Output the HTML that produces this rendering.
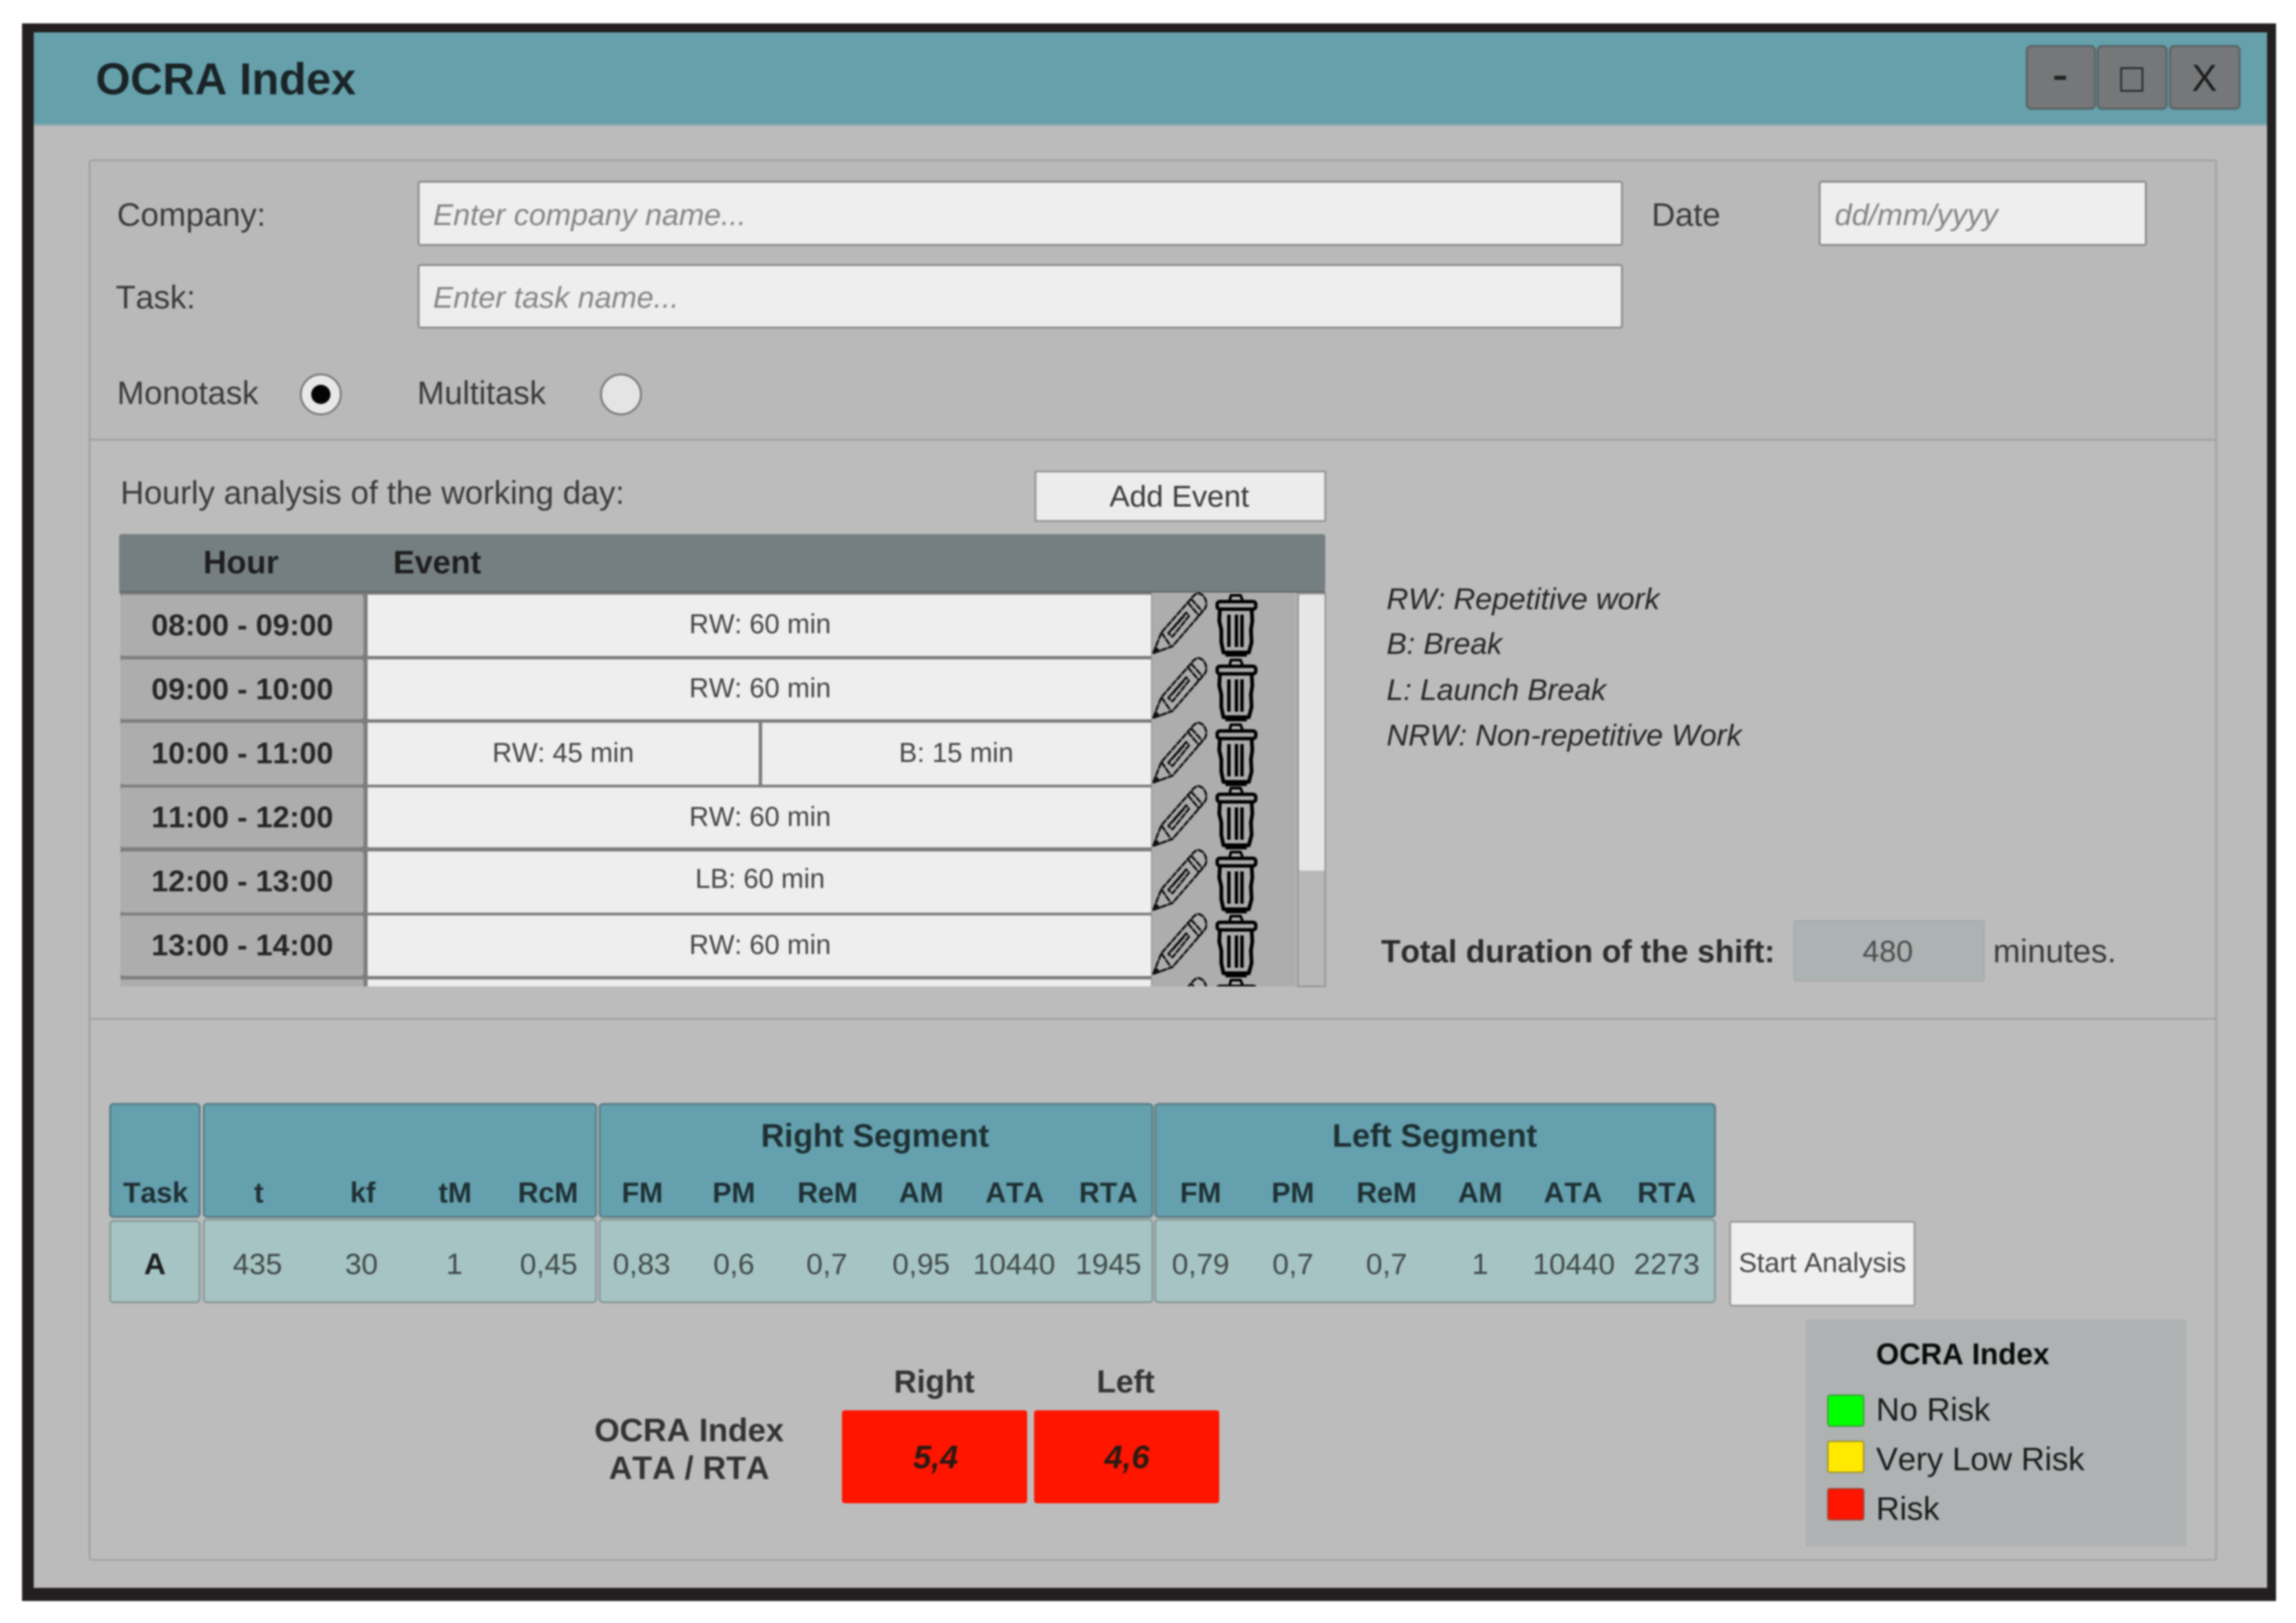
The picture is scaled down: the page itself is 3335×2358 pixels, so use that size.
<!DOCTYPE html>
<html><head><meta charset="utf-8"><title>OCRA Index</title>
<style>
html,body{margin:0;padding:0;background:#fff;width:3335px;height:2358px;overflow:hidden}
svg{display:block;filter:blur(1.3px)}
text{font-family:"Liberation Sans",sans-serif;fill:#3a3a3a;font-kerning:none}
.b{font-weight:700;fill:#2a2a2a}
.m{text-anchor:middle}
.ph{font-style:italic;fill:#858585;font-size:44px}
.l{font-size:47.4px}
.it{font-style:italic;font-size:43.8px;fill:#262626}
.ev{font-size:39.4px;fill:#444;text-anchor:middle}
.hr{font-size:44px;font-weight:700;fill:#262626;text-anchor:middle}
.th{font-size:41.5px;font-weight:700;fill:#1f3034;text-anchor:middle}
.td{font-size:43px;fill:#414949;text-anchor:middle}
</style></head><body>
<svg xmlns="http://www.w3.org/2000/svg" width="3335" height="2358" viewBox="0 0 3335 2358">
<defs>
<clipPath id="rows"><rect x="173" y="860" width="1752" height="573"/></clipPath>
<g id="ico">
<g fill="none" stroke="#0a0a0a" stroke-width="3" stroke-linejoin="round" stroke-dasharray="10 1">
<path d="M5 94 L17 64 L60 15 Q66 7 71 7 Q80 9 82 20 Q83 27 78 32 L33 84 Z"/>
<path d="M55 20 L72 40 M60 15 L77 34 M17 64 L30 83"/>
<path d="M27 65 L53 35 L57 40 L33 70 Z M32 60 L50 40"/>
</g>
<path d="M5 94 L9 85 L15 91 Z" fill="#111" stroke="#111" stroke-width="1.5"/>
<g fill="none" stroke="#000" stroke-linejoin="round">
<path d="M116 18 L118 10 L132 10 L135 18" stroke-width="4" fill="#b5b5b5"/>
<rect x="98" y="19" width="56" height="11" rx="4" stroke-width="5" fill="#a9a9a9"/>
<path d="M102 30 L101 47 L104 60 L104 78 L107 93 L144 93 L148 78 L147 60 L149 47 L148 30" stroke-width="5.5"/>
<path d="M110 96 H141" stroke-width="6"/>
<path d="M115 38 V85 M126 38 V85 M134 38 V85" stroke-width="5"/>
</g>
</g>
</defs>

<!-- window -->
<rect x="32" y="34" width="3274" height="2292" fill="#231f20"/>
<rect x="49" y="47" width="3244" height="2260" fill="#bbbbbb"/>
<rect x="49" y="47" width="3244" height="134" fill="#65a0ab"/>
<rect x="49" y="180" width="3244" height="3" fill="#8fa9ad"/>
<text class="b" x="139" y="137" font-size="65" style="fill:#1a2427" textLength="378" lengthAdjust="spacingAndGlyphs">OCRA Index</text>

<g stroke="#596467" stroke-width="3" fill="#757779">
<rect x="2944" y="67" width="99" height="91" rx="6"/>
<rect x="3047" y="67" width="100" height="91" rx="6"/>
<rect x="3152" y="67" width="101" height="91" rx="6"/>
</g>
<rect x="2984" y="110" width="17" height="6" fill="#222"/>
<rect x="3081" y="99" width="31" height="33" fill="none" stroke="#2a2a2a" stroke-width="2.6"/>
<text x="3202" y="132" class="m" font-size="55" style="fill:#1c1c1c">X</text>

<!-- panel -->
<rect x="130" y="233" width="3089" height="2033" rx="3" fill="#b9b9b9" stroke="#a4a4a4" stroke-width="3"/>
<path d="M130 639 H3219" stroke="#a2a2a2" stroke-width="3"/>
<path d="M130 1480 H3219" stroke="#a2a2a2" stroke-width="3"/>
<rect x="132" y="641" width="3085" height="838" fill="#bcbcbc"/>
<rect x="132" y="1482" width="3085" height="783" fill="#bcbcbc"/>

<!-- top form -->
<text class="l" x="170" y="328">Company:</text>
<text class="l" x="168" y="448">Task:</text>
<text class="l" x="2399" y="328">Date</text>
<g fill="#eeeeee" stroke="#8e8e8e" stroke-width="3">
<rect x="608" y="264" width="1748" height="92" rx="3"/>
<rect x="608" y="385" width="1748" height="91" rx="3"/>
<rect x="2643" y="264" width="474" height="92" rx="3"/>
</g>
<text class="ph" x="629" y="327">Enter company name...</text>
<text class="ph" x="629" y="447">Enter task name...</text>
<text class="ph" x="2665" y="327" textLength="237" lengthAdjust="spacingAndGlyphs">dd/mm/yyyy</text>
<text class="l" x="170" y="587">Monotask</text>
<text class="l" x="606" y="587">Multitask</text>
<circle cx="466" cy="573" r="29" fill="#e8e8e8" stroke="#7d7d7d" stroke-width="3"/>
<circle cx="466" cy="573" r="14" fill="#050505"/>
<circle cx="902" cy="573" r="29" fill="#e4e4e4" stroke="#7d7d7d" stroke-width="3"/>

<!-- schedule -->
<text class="l" x="175" y="732" textLength="732" lengthAdjust="spacingAndGlyphs">Hourly analysis of the working day:</text>
<rect x="1504" y="685" width="421" height="72" fill="#ececec" stroke="#9a9a9a" stroke-width="3"/>
<text x="1713" y="736" class="m" font-size="44">Add Event</text>

<rect x="173" y="776" width="1752" height="83" rx="4" fill="#757f82"/>
<path d="M173 860 H1925" stroke="#656a6c" stroke-width="3"/>
<text class="b" x="350" y="833" font-size="47" style="text-anchor:middle;fill:#1e1e1e">Hour</text>
<text class="b" x="571" y="833" font-size="47" style="fill:#1e1e1e">Event</text>

<rect x="1885" y="862" width="40" height="571" fill="#b8b8b8" stroke="#8f8f8f" stroke-width="2"/>
<rect x="1887" y="864" width="37" height="401" rx="3" fill="#e6e6e6"/>
<g clip-path="url(#rows)">
<rect x="175" y="861" width="1498" height="572" fill="#7d7d7d"/>
<rect x="1673" y="861" width="209" height="572" fill="#adadad"/>
<g fill="#adadad">
<rect x="175" y="864" width="353" height="89" rx="4"/>
<rect x="175" y="958" width="353" height="87" rx="4"/>
<rect x="175" y="1050" width="353" height="90" rx="4"/>
<rect x="175" y="1144" width="353" height="87" rx="4"/>
<rect x="175" y="1237" width="353" height="89" rx="4"/>
<rect x="175" y="1330" width="353" height="88" rx="4"/>
<rect x="175" y="1423" width="353" height="20"/>
</g>
<g fill="#eeeeee">
<rect x="534" y="864" width="1138" height="89"/>
<rect x="534" y="958" width="1138" height="87"/>
<rect x="534" y="1050" width="568" height="90"/>
<rect x="1107" y="1050" width="565" height="90"/>
<rect x="534" y="1144" width="1138" height="87"/>
<rect x="534" y="1237" width="1138" height="89"/>
<rect x="534" y="1330" width="1138" height="88"/>
<rect x="534" y="1423" width="1138" height="20"/>
</g>
<use href="#ico" transform="translate(1670,855)"/>
<use href="#ico" transform="translate(1670,949)"/>
<use href="#ico" transform="translate(1670,1043)"/>
<use href="#ico" transform="translate(1670,1135)"/>
<use href="#ico" transform="translate(1670,1228)"/>
<use href="#ico" transform="translate(1670,1321)"/>
<use href="#ico" transform="translate(1670,1414)"/>
</g>
<text class="hr" x="352" y="923">08:00 - 09:00</text>
<text class="hr" x="352" y="1016">09:00 - 10:00</text>
<text class="hr" x="352" y="1109">10:00 - 11:00</text>
<text class="hr" x="352" y="1202">11:00 - 12:00</text>
<text class="hr" x="352" y="1295">12:00 - 13:00</text>
<text class="hr" x="352" y="1388">13:00 - 14:00</text>
<text class="ev" x="1104" y="920">RW: 60 min</text>
<text class="ev" x="1104" y="1013">RW: 60 min</text>
<text class="ev" x="818" y="1107">RW: 45 min</text>
<text class="ev" x="1389" y="1107">B: 15 min</text>
<text class="ev" x="1104" y="1200">RW: 60 min</text>
<text class="ev" x="1104" y="1290">LB: 60 min</text>
<text class="ev" x="1104" y="1386">RW: 60 min</text>

<!-- legend text -->
<text class="it" x="2014" y="885">RW: Repetitive work</text>
<text class="it" x="2014" y="950">B: Break</text>
<text class="it" x="2014" y="1017">L: Launch Break</text>
<text class="it" x="2014" y="1083">NRW: Non-repetitive Work</text>
<text class="b" x="2006" y="1398" font-size="46.2" style="fill:#2c2c2c">Total duration of the shift:</text>
<rect x="2606" y="1338" width="276" height="87" rx="3" fill="#adb2b3" stroke="#a5a9aa" stroke-width="2"/>
<text x="2742" y="1397" class="m" font-size="44" style="fill:#4d4d4d">480</text>
<text class="l" x="2895" y="1398">minutes.</text>

<!-- results table -->
<g fill="#64a0ad" stroke="#5b7f87" stroke-width="3">
<rect x="160" y="1604" width="130" height="164" rx="5"/>
<rect x="296" y="1604" width="570" height="164" rx="5"/>
<rect x="871" y="1604" width="803" height="164" rx="5"/>
<rect x="1678" y="1604" width="813" height="164" rx="5"/>
</g>
<g fill="#a6c4c4" stroke="#8b9c9c" stroke-width="3">
<rect x="160" y="1774" width="130" height="118" rx="5"/>
<rect x="296" y="1772" width="570" height="120" rx="5"/>
<rect x="871" y="1772" width="803" height="120" rx="5"/>
<rect x="1678" y="1772" width="813" height="120" rx="5"/>
</g>
<text class="b m" x="1271" y="1666" font-size="47" style="fill:#1e3034">Right Segment</text>
<text class="b m" x="2084" y="1666" font-size="47" style="fill:#1e3034">Left Segment</text>
<g>
<text class="th" x="226" y="1747">Task</text>
<text class="th" x="376" y="1747">t</text>
<text class="th" x="527" y="1747">kf</text>
<text class="th" x="661" y="1747">tM</text>
<text class="th" x="796" y="1747">RcM</text>
<text class="th" x="933" y="1747">FM</text>
<text class="th" x="1066" y="1747">PM</text>
<text class="th" x="1202" y="1747">ReM</text>
<text class="th" x="1338" y="1747">AM</text>
<text class="th" x="1474" y="1747">ATA</text>
<text class="th" x="1610" y="1747">RTA</text>
<text class="th" x="1744" y="1747">FM</text>
<text class="th" x="1878" y="1747">PM</text>
<text class="th" x="2014" y="1747">ReM</text>
<text class="th" x="2150" y="1747">AM</text>
<text class="th" x="2285" y="1747">ATA</text>
<text class="th" x="2421" y="1747">RTA</text>
</g>
<g>
<text class="b m" x="225" y="1851" font-size="44" style="fill:#1e1e1e">A</text>
<text class="td" x="374" y="1851">435</text>
<text class="td" x="525" y="1851">30</text>
<text class="td" x="660" y="1851">1</text>
<text class="td" x="797" y="1851">0,45</text>
<text class="td" x="932" y="1851">0,83</text>
<text class="td" x="1066" y="1851">0,6</text>
<text class="td" x="1201" y="1851">0,7</text>
<text class="td" x="1338" y="1851">0,95</text>
<text class="td" x="1473" y="1851">10440</text>
<text class="td" x="1610" y="1851">1945</text>
<text class="td" x="1744" y="1851">0,79</text>
<text class="td" x="1878" y="1851">0,7</text>
<text class="td" x="2014" y="1851">0,7</text>
<text class="td" x="2150" y="1851">1</text>
<text class="td" x="2286" y="1851">10440</text>
<text class="td" x="2421" y="1851">2273</text>
</g>
<rect x="2513" y="1775" width="268" height="122" rx="3" fill="#efefef" stroke="#9d9d9d" stroke-width="3"/>
<text x="2647" y="1848" class="m" font-size="39.8" style="fill:#444">Start Analysis</text>

<!-- legend box -->
<rect x="2623" y="1917" width="553" height="330" rx="3" fill="#aeb2b3"/>
<text class="b" x="2725" y="1982" font-size="43.2" style="fill:#0c0c0c">OCRA Index</text>
<rect x="2655" y="2027" width="52" height="45" rx="3" fill="#00ff00" stroke="#3f9a3f" stroke-width="2"/>
<rect x="2655" y="2094" width="52" height="45" rx="3" fill="#ffe900" stroke="#9a9130" stroke-width="2"/>
<rect x="2655" y="2163" width="52" height="45" rx="3" fill="#ff1500" stroke="#a04030" stroke-width="2"/>
<text class="l" x="2725" y="2064" style="fill:#1c1c1c">No Risk</text>
<text class="l" x="2725" y="2136" style="fill:#1c1c1c">Very Low Risk</text>
<text class="l" x="2725" y="2208" style="fill:#1c1c1c">Risk</text>

<!-- result -->
<text class="b m" x="1001" y="2094" font-size="47.2" style="fill:#333">OCRA Index</text>
<text class="b m" x="1001" y="2149" font-size="47.2" style="fill:#333">ATA / RTA</text>
<text class="b m" x="1357" y="2023" font-size="46" style="fill:#333">Right</text>
<text class="b m" x="1635" y="2023" font-size="46" style="fill:#333">Left</text>
<rect x="1223" y="2049" width="269" height="135" rx="4" fill="#ff1500"/>
<rect x="1502" y="2049" width="269" height="135" rx="4" fill="#ff1500"/>
<text class="b m" x="1359" y="2133" font-size="47" font-style="italic" style="fill:#2a1a12">5,4</text>
<text class="b m" x="1637" y="2133" font-size="47" font-style="italic" style="fill:#2a1a12">4,6</text>
</svg>
</body></html>
